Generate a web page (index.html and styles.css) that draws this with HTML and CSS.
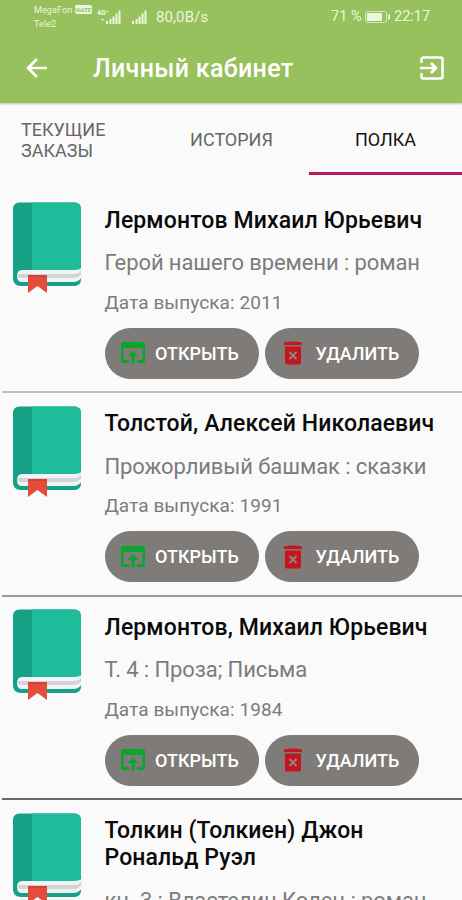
FILE: index.html
```html
<!DOCTYPE html>
<html lang="ru">
<head>
<meta charset="utf-8">
<title>Личный кабинет</title>
<link rel="stylesheet" href="styles.css">
</head>
<body>
<svg class="defs" aria-hidden="true">
  <symbol id="book" viewBox="0 0 70 92">
    <path d="M7 .500H63a6 6 0 0 1 6 6V77c0 5-3 7-7 7H9c-5 0-8-3-8-8V6.500a6 6 0 0 1 6-6Z" fill="#16a085"/>
    <path d="M20 .500H63a6 6 0 0 1 6 6V62q0 7-7 7H20Z" fill="#1fbc9c"/>
    <path d="M70 65q-2 3-8 3H10q-5 0-5 6t5 6H61q6 0 9-5Z" fill="#f1f3f4"/>
    <path d="M69 68.500q-2 3.500-7 3.500H6q-1 4 3 4H61q6 0 8-4Z" fill="#d2d5d7"/>
    <path d="M16 73H35V91L25.500 84L16 91Z" fill="#e64c3c"/>
    <path d="M16 73H35V75H16Z" fill="#cf4435"/>
  </symbol>
  <symbol id="open" viewBox="0 0 24 22">
    <path d="M2 0H22a2 2 0 0 1 2 2V19a2 2 0 0 1-2 2H16V18H21.500V6H2.500V18H8V21H2a2 2 0 0 1-2-2V2a2 2 0 0 1 2-2ZM12 8.500L17.500 14H13.500V21.500H10.500V14H6.500Z"/>
  </symbol>
  <symbol id="trash" viewBox="0 0 18 24">
    <path d="M0 1.500Q9-.500 18 1.500V4H0ZM1 5.500H17V21.500a2 2 0 0 1-2 2H3a2 2 0 0 1-2-2Z"/>
    <path class="cross" d="M5.500 11L12.500 18M12.500 11L5.500 18"/>
  </symbol>
</svg>
<header class="header">
  <div class="status">
    <div class="carriers"><span>MegaFon <b class="volte">VoLTE</b></span><span>Tele2</span></div>
    <svg class="signal-lte" width="26" height="16" viewBox="0 0 26 16"><text x="0" y="6" class="tiny">4G⁺</text><path d="M9 12h2v3H9zM12.500 10h2v5h-2zM15.500 7.500h2V15h-2zM18.500 4.500h2V15h-2zM21.500 1.500h2V15h-2zM4 10h3l-1.500 2z"/></svg>
    <svg class="signal" width="16" height="16" viewBox="0 0 16 16"><path d="M0 12h2v3H0zM3.500 10h2v5h-2zM6.500 7.500h2V15h-2zM9.500 4.500h2V15h-2zM12.500 1.500h2V15h-2z"/></svg>
    <span class="speed">80,0B/s</span>
    <span class="charge">71 %</span>
    <svg class="battery" width="25" height="12" viewBox="0 0 25 12"><rect x=".5" y=".5" width="21" height="11" rx="2" class="shell"/><rect x="2" y="2" width="15" height="8"/><rect x="23" y="3.500" width="2" height="5"/></svg>
    <span class="clock">22:17</span>
  </div>
  <div class="toolbar">
    <svg class="back" width="22" height="20" viewBox="0 0 22 20"><path d="M21 10H2.500M11 1L2 10l9 9"/></svg>
    <h1>Личный кабинет</h1>
    <svg class="exit" width="24" height="24" viewBox="0 0 24 24"><path d="M1.500 7V3.500a2 2 0 0 1 2-2H20.500a2 2 0 0 1 2 2V20.500a2 2 0 0 1-2 2H3.500a2 2 0 0 1-2-2V17M0 12H16M11 7l5 5-5 5"/></svg>
  </div>
</header>
<nav class="tabs">
  <a class="tab wrap"><span>ТЕКУЩИЕ ЗАКАЗЫ</span></a>
  <a class="tab"><span>ИСТОРИЯ</span></a>
  <a class="tab active"><span>ПОЛКА</span></a>
</nav>
<main>
  <article class="item">
    <svg class="book"><use href="#book"/></svg>
    <div class="info">
      <h2>Лермонтов Михаил Юрьевич</h2>
      <p class="name">Герой нашего времени : роман</p>
      <p class="date">Дата выпуска: 2011</p>
      <div class="actions"><button><svg class="open"><use href="#open"/></svg>ОТКРЫТЬ</button><button><svg class="trash"><use href="#trash"/></svg>УДАЛИТЬ</button></div>
    </div>
  </article>
  <article class="item middle">
    <svg class="book"><use href="#book"/></svg>
    <div class="info">
      <h2>Толстой, Алексей Николаевич</h2>
      <p class="name">Прожорливый башмак : сказки</p>
      <p class="date">Дата выпуска: 1991</p>
      <div class="actions"><button><svg class="open"><use href="#open"/></svg>ОТКРЫТЬ</button><button><svg class="trash"><use href="#trash"/></svg>УДАЛИТЬ</button></div>
    </div>
  </article>
  <article class="item last">
    <svg class="book"><use href="#book"/></svg>
    <div class="info">
      <h2>Лермонтов, Михаил Юрьевич</h2>
      <p class="name">Т. 4 : Проза; Письма</p>
      <p class="date">Дата выпуска: 1984</p>
      <div class="actions"><button><svg class="open"><use href="#open"/></svg>ОТКРЫТЬ</button><button><svg class="trash"><use href="#trash"/></svg>УДАЛИТЬ</button></div>
    </div>
  </article>
  <article class="item">
    <svg class="book"><use href="#book"/></svg>
    <div class="info">
      <h2>Толкин (Толкиен) Джон<br>Рональд Руэл</h2>
      <p class="name">кн. 3 : Властелин Колец : роман</p>
    </div>
  </article>
</main>
</body>
</html>
```
FILE: styles.css
```css
* { box-sizing: border-box; }
body {
  margin: 0;
  height: 900px;
  overflow: hidden;
  background: #fafafa;
  font-family: Roboto, "Liberation Sans", sans-serif;
  white-space: nowrap;
}
h1, h2, p { margin: 0; }
.defs { display: none; }

.header {
  height: 103px;
  background: #97c15c;
  color: #fff;
  box-shadow: 0 1px 2px rgba(0, 0, 0, .25);
}
.status {
  display: flex;
  align-items: center;
  height: 33px;
  padding-left: 34px;
  color: #edf6df;
  fill: #edf6df;
  font-size: 14.500px;
}
.carriers {
  display: flex;
  flex-direction: column;
  width: 61px;
  font-size: 9px;
  line-height: 14px;
  letter-spacing: .1px;
}
.volte {
  display: inline-block;
  width: 17px;
  height: 9px;
  border-radius: 2px;
  background: #edf6df;
  color: #97c15c;
  font-size: 6px;
  line-height: 9px;
  letter-spacing: -.2px;
  text-align: center;
  vertical-align: 1px;
}
.tiny { font-size: 7px; font-weight: 700; }
.signal-lte { margin-left: 2px; }
.signal { margin-left: 9px; }
.speed { margin-left: 8px; width: 175px; font-size: 15px; letter-spacing: .1px; }
.charge { width: 33px; }
.battery { margin-left: 1px; }
.battery .shell { fill: none; stroke: #edf6df; stroke-opacity: .7; }
.clock { margin-left: 4px; }
.toolbar {
  display: flex;
  align-items: center;
  height: 69px;
  padding: 0 18px 0 26px;
}
.toolbar svg { fill: none; stroke: #fff; stroke-width: 2.600; }
.toolbar h1 {
  flex: 1;
  margin: 2px 0 0 45px;
  font-size: 25px;
  font-weight: 500;
  line-height: 30px;
  letter-spacing: .33px;
}

.tabs {
  display: grid;
  grid-template-columns: 154px 155px 153px;
  height: 72px;
}
.tab {
  display: flex;
  align-items: center;
  justify-content: center;
  padding-top: 4px;
  border-bottom: 3px solid transparent;
  color: #666;
  font-size: 18px;
  line-height: 21px;
}
.wrap { justify-content: flex-start; padding-left: 21px; white-space: normal; }
.active { border-color: #b8185d; color: #111; }

.item {
  display: flex;
  height: 203.500px;
  margin-left: 2px;
  padding-left: 10px;
  border-bottom: 2px solid #c0c0c0;
}
.item:first-child { margin-top: 14.500px; }
.middle { border-color: #999; }
.last { border-color: #666; }
.book { width: 70px; height: 92px; margin-top: 12.500px; }
.info { margin-left: 22.500px; padding-top: 17px; }
h2 {
  color: #0a0a0a;
  font-size: 23px;
  font-weight: 500;
  line-height: 27px;
  letter-spacing: .12px;
}
.name {
  margin-top: 15.500px;
  color: #7c7c7c;
  font-size: 22px;
  font-weight: 400;
  line-height: 27px;
  letter-spacing: -.1px;
}
.date {
  margin-top: 15.500px;
  color: #7c7c7c;
  font-size: 19px;
  line-height: 22px;
  letter-spacing: .08px;
}
.actions { display: flex; gap: 6.500px; margin-top: 14px; }
button {
  display: flex;
  align-items: center;
  width: 154px;
  height: 51px;
  padding: 0 0 0 16.500px;
  border: 0;
  border-radius: 26px;
  background: #7e7b79;
  color: #fff;
  font: 500 18px Roboto, "Liberation Sans", sans-serif;
}
.open { width: 24px; height: 22px; margin-right: 10px; fill: #0aa52e; }
.trash { width: 18px; height: 24px; margin: 0 14px 0 2px; fill: #c4161c; }
.cross { stroke: #8f8481; stroke-width: 2; }
```
